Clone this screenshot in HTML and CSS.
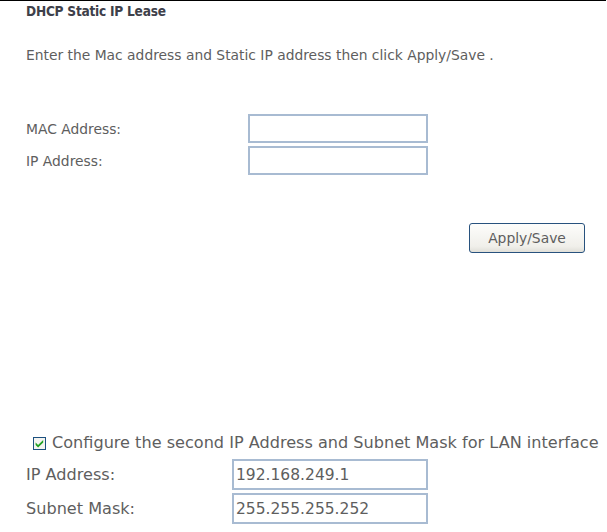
FILE: index.html
```html
<!DOCTYPE html>
<html>
<head>
<meta charset="utf-8">
<link rel="stylesheet" href="styles.css">
</head>
<body>
<div class="page">
  <div class="lease">
    <div class="title">DHCP Static IP Lease</div>
    <div class="desc">Enter the Mac address and Static IP address then click Apply/Save .</div>
    <div class="form1">
      <label class="lbl">MAC Address:</label>
      <input class="field f1" type="text">
      <label class="lbl">IP Address:</label>
      <input class="field f1" type="text">
    </div>
    <div class="actions">
      <button class="btn" type="button">Apply/Save</button>
    </div>
  </div>
  <div class="second">
    <div class="check-row">
      <span class="cb">
        <svg width="13" height="13" viewBox="0 0 13 13">
          <rect x="0.5" y="0.5" width="12" height="12" fill="#f4f4f0" stroke="#1c5180"/>
          <path d="M2.6 5.6 L5.1 8 L10.2 2.9 L10.2 5.5 L5.1 10.6 L2.6 8.1 Z" fill="#21a121"/>
        </svg>
      </span>
      <span class="check-text">Configure the second IP Address and Subnet Mask for LAN interface</span>
    </div>
    <div class="form2">
      <label class="lbl2">IP Address:</label>
      <input class="field f2" type="text" value="192.168.249.1">
      <label class="lbl2">Subnet Mask:</label>
      <input class="field f2" type="text" value="255.255.255.252">
    </div>
  </div>
</div>
</body>
</html>
```
FILE: styles.css
```css
html, body {
  margin: 0;
  padding: 0;
  background: #ffffff;
}
body {
  font-family: "DejaVu Sans", sans-serif;
  font-size: 13.85px;
  color: #5e5e5e;
}
.page {
  width: 606px;
  border-top: 1px solid #000;
}
.lease {
  padding-left: 26px;
}
.title {
  font-family: "DejaVu Sans Condensed", "DejaVu Sans", sans-serif;
  font-size: 13.6px;
  letter-spacing: -0.25px;
  font-weight: bold;
  color: #3e404a;
  line-height: 20px;
}
.desc {
  margin-top: 24px;
  line-height: 20px;
}
.form1 {
  margin-top: 49px;
  display: grid;
  grid-template-columns: 222px 180px;
  row-gap: 3px;
  align-items: center;
}
.lbl {
  line-height: 20px;
}
.lbl2 {
  line-height: 20px;
}
.field {
  box-sizing: border-box;
  margin: 0;
  border: 2px solid #a8bbd2;
  background: #fff;
  font-family: inherit;
  color: #5e5e5e;
  padding: 0 2px;
  outline: none;
}
.f1 {
  width: 180px;
  height: 29px;
  font-size: 13.85px;
}
.actions {
  margin-top: 48px;
  display: flex;
  justify-content: flex-end;
  padding-right: 21px;
}
.btn {
  box-sizing: border-box;
  width: 116px;
  height: 30px;
  border: 1px solid #28527e;
  border-radius: 3px;
  background: linear-gradient(#fdfdfb, #f0efea 80%, #e0dfd8);
  font-family: inherit;
  font-size: 13.85px;
  color: #5e5e5e;
  padding: 0;
}
.second {
  margin-top: 180px;
  padding-left: 26px;
  font-size: 16.1px;
}
.check-row {
  display: flex;
  align-items: center;
  height: 20px;
}
.cb {
  display: flex;
  margin-left: 7px;
  margin-right: 6px;
}
.check-text {
  line-height: 20px;
}
.form2 {
  margin-top: 6px;
  display: grid;
  grid-template-columns: 206px 196px;
  row-gap: 3px;
  align-items: center;
}
.f2 {
  width: 196px;
  height: 31px;
  font-size: 15.5px;
}
```
